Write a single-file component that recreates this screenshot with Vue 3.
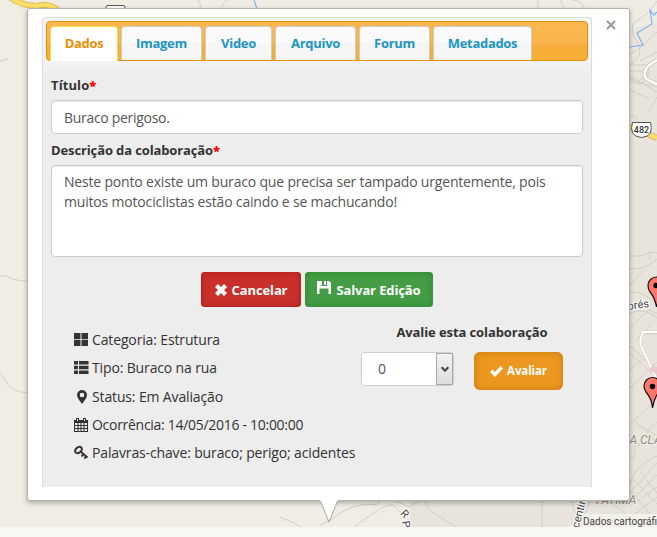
<script setup>
import { ref } from 'vue'

const tabs = [
  { label: 'Dados', width: 68 },
  { label: 'Imagem', width: 81 },
  { label: 'Video', width: 67 },
  { label: 'Arquivo', width: 81 },
  { label: 'Forum', width: 71 },
  { label: 'Metadados', width: 99 }
]
const active = ref('Dados')
const titulo = ref('Buraco perigoso.')
const descricao = ref('Neste ponto existe um buraco que precisa ser tampado urgentemente, pois muitos motociclistas estão caindo e se machucando!')
const details = [
  { icon: 'grid', text: 'Categoria: Estrutura' },
  { icon: 'list', text: 'Tipo: Buraco na rua' },
  { icon: 'marker', text: 'Status: Em Avaliação' },
  { icon: 'calendar', text: 'Ocorrência: 14/05/2016 - 10:00:00' },
  { icon: 'key', text: 'Palavras-chave: buraco; perigo; acidentes' }
]
</script>

<template>
  <main class="screen">
    <svg class="map" width="657" height="537" viewBox="0 0 657 537">
      <rect width="657" height="537" fill="#f0ede5" />
      <path d="M415 0H657V527H410V500L405 490Z" fill="#e8e4dc" />
      <path d="M330 0H657V30H330Z" fill="#efece4" />
      <path d="M630 30L657 22V0H657V70H630Z" fill="#ebe7df" />
      <g fill="none" stroke="#d3cec3" stroke-width="1">
        <path d="M0 62Q4 59 8 59M198 0Q202 4 200 9M228 0Q221 3 222 9M538 0V9M561 0Q562 7 566 9M573 0Q585 3 584 9" />
        <path d="M657 1Q650 14 636 21Q628 28 637 42T628 66M657 32L640 48L630 54M630 65H648Q652 78 640 84L630 78M630 71H647M630 76L657 92M630 81L657 87M630 90L650 99M640 61L657 52M636 84L648 73M657 97L649 111M630 116Q641 115 636 125" />
        <path d="M630 256H642L651 252L657 253M650 252V260M630 269Q645 270 657 259M630 286L643 270M630 292Q645 291 657 305M630 313Q645 307 657 318M630 329L648 310L657 313M630 346L657 370M630 353L657 378M636 340L650 326M630 388L657 362M643 334H657M630 370L642 359M630 425L657 398M635 421L657 443M630 436L640 445H635V458H630M657 422L645 432" />
        <path d="M630 485Q633 466 657 456M630 493L657 463M630 502L657 475M640 471L657 493M633 479L657 504M630 490L650 514M630 506L657 487M630 518L657 497M610 501L630 518M582 520L590 501M657 436L639 425" />
        <path d="M280 517Q293 522 301 527M320 525Q331 521 343 511Q362 502 377 505L380 500M354 527Q380 507 390 505Q395 504 401 513M382 513L385 510M394 500L409 507L420 500M425 500Q425 509 440 517L456 527" />
        <path d="M0 276H6Q15 281 27 281M0 372L6 381Q9 391 27 393" />
        <path d="M542 500V527M571 500L580 527" />
      </g>
      <g fill="none">
        <path d="M7 -5Q20 6 37 6Q48 3 58 10" stroke="#dfbd57" stroke-width="6" />
        <path d="M7 -5Q20 6 37 6Q48 3 58 10" stroke="#ffe168" stroke-width="4" />
        <path d="M254 0L257 9M657 12L654 15L650 10L652 24L637 33L643 45L630 47" stroke="#88aef3" stroke-width="1.2" />
        <path d="M657 60L648 66Q641 75 648 80L657 84" stroke="#c9c4b8" stroke-width="4" />
        <path d="M657 60L648 66Q641 75 648 80L657 84" stroke="#fff" stroke-width="2.500" />
        <path d="M628 126L657 138" stroke="#dfb85c" stroke-width="6" />
        <path d="M628 126L657 138" stroke="#ffe168" stroke-width="4" />
        <path d="M657 332H643Q639 340 641 346L657 380" stroke="#d2cdc4" stroke-width="3" />
        <path d="M657 332H643Q639 340 641 346L657 380" stroke="#fff" stroke-width="2" />
      </g>
      <path d="M650 370Q650 365 657 367V375Z" fill="#e9c9cf" />
      <path d="M106 10V7Q106 5.500 108 5.500H123Q125 5.500 125 7V10" fill="#fff" stroke="#555" />
      <path d="M632.500 122.500H650.500Q652 127 650.500 133Q648 137 641.500 137.500Q635 137 632.500 133Q630.500 128 632.500 122.500Z" fill="#fff" stroke="#555" />
      <text x="641.500" y="133" class="map-road" text-anchor="middle">482</text>
      <g class="map-label">
        <text x="622" y="310" transform="rotate(-8 628 310)">norés</text>
        <text x="401" y="517" transform="rotate(48 404 514)">R</text>
        <text x="404" y="525" transform="rotate(80 405 522)">P</text>
        <text x="578" y="531" transform="rotate(-75 578 531)">icentim</text>
      </g>
      <text x="623" y="444" class="map-area">TA CLARA</text>
      <text x="596" y="504" class="map-area">FATIMA</text>
      <g fill="#ff766a" stroke="#111" stroke-width="1.200">
        <path d="M656.500 307Q655 298 650 292Q648 289 648 285.500A8.500 8.500 0 0 1 665 285.500Q665 289 662 293Q658 298 656.500 307Z" />
        <path d="M652.500 408Q652 399 646 392Q644 389 644 386A8.500 8.500 0 0 1 661 386Q661 389 658 393Q654 399 652.500 408Z" />
      </g>
      <circle cx="656" cy="285.500" r="2.700" />
      <circle cx="652.500" cy="386.500" r="2.700" />
      <rect x="582" y="514" width="75" height="13" fill="#f5f4f0" opacity=".8" />
      <text x="583" y="525" class="map-credit">Dados cartográficos</text>
      <rect y="527" width="657" height="10" fill="#f8f7f2" />
    </svg>

    <section class="popup">
      <div class="panel">
        <nav class="tabs">
          <button
            v-for="t in tabs"
            :key="t.label"
            class="tab"
            :class="{ active: t.label === active }"
            :style="{ width: t.width + 'px' }"
            @click="active = t.label"
          >{{ t.label }}</button>
        </nav>

        <form class="form" @submit.prevent>
          <label class="label title-label" for="titulo">Título<b>*</b></label>
          <input id="titulo" v-model="titulo" class="field">
          <label class="label" for="descricao">Descrição da colaboração<b>*</b></label>
          <textarea id="descricao" v-model="descricao" class="field area"></textarea>
          <div class="actions">
            <button class="btn red">
              <svg width="12" height="12" viewBox="0 0 12 12"><path d="M3 0L6 3L9 0L12 3L9 6L12 9L9 12L6 9L3 12L0 9L3 6L0 3Z" /></svg>
              <span>Cancelar</span>
            </button>
            <button class="btn green">
              <svg class="disk" width="14" height="13" viewBox="0 0 14 13"><path d="M0 0H3V5H10V0H12L14 2V13H11.500V7.500H2.500V13H0ZM7 0H9V4H7Z" /><path d="M3 0H5V4.500H3Z" /></svg>
              <span>Salvar Edição</span>
            </button>
          </div>
        </form>

        <div class="bottom">
          <ul class="details">
            <li v-for="d in details" :key="d.icon" :class="d.icon">
              <svg width="14" height="14" viewBox="0 0 14 14">
                <path v-if="d.icon === 'grid'" d="M0 0H6.500V6.200H0ZM7.500 0H14V6.200H7.500ZM0 7H6.500V13H0ZM7.500 7H14V13H7.500Z" />
                <path v-else-if="d.icon === 'list'" d="M0 0H4V3.500H0ZM5 0H14.500V3.500H5ZM0 4.700H4V8.200H0ZM5 4.700H14.500V8.200H5ZM0 9.500H4V13H0ZM5 9.500H14.500V13H5Z" />
                <path v-else-if="d.icon === 'marker'" fill-rule="evenodd" d="M8 0A5 5 0 0 0 3 5C3 8 6 11 8 14C10 11 13 8 13 5A5 5 0 0 0 8 0ZM8 2.700A2.300 2.300 0 1 1 8 7.300A2.300 2.300 0 1 1 8 2.700Z" />
                <path v-else-if="d.icon === 'calendar'" fill-rule="evenodd" d="M0 2H2V0H5V2H9V0H12V2H14V14H0ZM1 5V7H3.500V5ZM4.500 5V7H6.500V5ZM7.500 5V7H9.500V5ZM10.500 5V7H13V5ZM1 8V10H3.500V8ZM4.500 8V10H6.500V8ZM7.500 8V10H9.500V8ZM10.500 8V10H13V8ZM1 11V13H3.500V11ZM4.500 11V13H6.500V11ZM7.500 11V13H9.500V11ZM10.500 11V13H13V11ZM3 1V3H4V1ZM10 1V3H11V1Z" />
                <g v-else fill="none" stroke="#333" stroke-width="2">
                  <ellipse cx="4.500" cy="4" rx="3.800" ry="2.700" transform="rotate(-40 4.500 4)" />
                  <path d="M6.500 5.500L13.500 11.500M9.500 8L7.500 10.500M12 10L10.500 12.500" />
                </g>
              </svg>
              <span>{{ d.text }}</span>
            </li>
          </ul>
          <div class="rating">
            <h2>Avalie esta colaboração</h2>
            <div class="rate-row">
              <div class="select">
                <span>0</span>
                <i><svg width="8" height="7" viewBox="0 0 8 7"><path d="M.7 1.200L4 4.700L7.300 1.200" fill="none" stroke="#444" stroke-width="2" /></svg></i>
              </div>
              <button class="btn orange">
                <svg width="13" height="11" viewBox="0 0 13 11"><path d="M0 6L2.500 3.500L5 6L10.500 0L13 2.500L5 11Z" /></svg>
                <span>Avaliar</span>
              </button>
            </div>
          </div>
        </div>
      </div>
      <button class="close" aria-label="Fechar">
        <svg width="10" height="10" viewBox="0 0 10 10"><path d="M1 1L9 9M9 1L1 9" stroke="#999" stroke-width="2" /></svg>
      </button>
      <svg class="tail" width="24" height="28" viewBox="0 0 24 28"><path d="M2 0L11 22L20 0" fill="#fff" stroke="#aaa7a0" /><path d="M2 0H20" stroke="#fff" stroke-width="2" /></svg>
    </section>
  </main>
</template>

<style>
body { margin: 0; overflow: hidden; }
</style>

<style scoped>
* { box-sizing: border-box; }
.screen { position: relative; width: 657px; height: 537px; overflow: hidden; font: 14px/20px "Trebuchet MS", "Open Sans", sans-serif; letter-spacing: -.18px; color: #333; }
.map { display: block; letter-spacing: 0; }
.map text { font-family: Roboto, sans-serif; }
.map-road { font-size: 9px; font-weight: 500; fill: #333; }
.map-label text { font-size: 11px; fill: #444; stroke: #fff; stroke-width: 2px; paint-order: stroke; }
.map .map-area { font-size: 12px; font-style: italic; fill: #8f8b80; stroke: #f2efe9; stroke-width: 2px; paint-order: stroke; }
.map-credit { font-size: 10px; fill: #444; }
button, input, textarea { font: inherit; letter-spacing: inherit; }
.popup { position: absolute; left: 27px; top: 8px; width: 603px; height: 493px; padding: 8px 14px; display: flex; align-items: flex-start; background: #fff; border: 1px solid #b5b2ab; border-radius: 3px; box-shadow: 0 2px 5px rgba(0, 0, 0, .3); }
.panel { flex: none; width: 550px; height: 470px; padding: 3px; border: 1px solid #ddd; border-bottom: 0; border-radius: 4px 4px 0 0; background: linear-gradient(#f6f6f6 0, #f3f3f3 44px, #ededed 60px); }
.tabs { display: flex; align-items: flex-start; gap: 3px; height: 40px; padding: 4px 3px 0; border: 1px solid #e78f08; border-radius: 4px; background: linear-gradient(#fbb850 0, #f8b44a 60%, #f6ad37 61%, #f6ae36 100%); }
.tab { height: 34px; padding: 0; border: 1px solid #ccc; border-bottom: 0; border-radius: 4px 4px 0 0; background: linear-gradient(#fafafa 48%, #f5f5f5 52%, #f6f6f6); color: #1c94c4; font-weight: 700; font-size: 13px; line-height: 33px; letter-spacing: -.3px; text-align: center; }
.tab.active { height: 35px; padding-bottom: 1px; background: #fff; border-color: #fbd850; color: #eb8f00; }
.form { display: flex; flex-direction: column; padding: 0 5px; }
.label { height: 20px; margin: 6px 0 5px; font-weight: 700; font-size: 13px; letter-spacing: -.12px; }
.title-label { margin-top: 14px; letter-spacing: .1px; }
.label b { color: #f00; }
.field { width: 532px; height: 34px; padding: 6px 12px; border: 1px solid #ccc; border-radius: 4px; outline: 0; resize: none; background: #fff; color: #555; box-shadow: inset 0 1px 1px rgba(0, 0, 0, .075); }
input.field { letter-spacing: -.3px; }
.area { height: 92px; overflow: hidden; }
.actions { display: flex; justify-content: center; gap: 4px; margin-top: 15px; }
.btn { display: flex; align-items: center; justify-content: center; gap: 5px; height: 35px; padding: 0; border: 0; border-radius: 4px; color: #fff; fill: #fff; font-weight: 700; font-size: 13px; letter-spacing: -.12px; }
.disk { margin-top: -4px; }
.red { width: 100px; background: #c9302c; box-shadow: inset 0 0 6px #a51d1d; }
.green { width: 128px; background: #449d44; box-shadow: inset 0 0 6px #2c832c; }
.orange { width: 89px; height: 38px; border-radius: 6px; background: #ec971f; box-shadow: inset 0 0 7px #c37a10; font-size: 11.500px; gap: 4px; }
.bottom { display: flex; justify-content: space-between; padding: 19px 25px 0 28px; }
.details { margin: 0; padding: 0; list-style: none; }
.details li { display: flex; align-items: center; gap: 4px; height: 28.300px; white-space: nowrap; letter-spacing: -.14px; }
.details .calendar { letter-spacing: -.29px; }
.details svg { fill: #333; overflow: visible; }
.rating { width: 202px; }
.rating h2 { margin: -4px 0 10px 20px; font-size: 13px; font-weight: 700; line-height: 20px; letter-spacing: -.1px; text-align: center; }
.rate-row { display: flex; justify-content: space-between; align-items: flex-start; }
.select { display: flex; justify-content: space-between; width: 93px; height: 34px; padding-left: 16px; border: 1px solid #ccc; border-radius: 4px; background: #fff; line-height: 32px; color: #555; }
.select i { display: flex; align-items: center; justify-content: center; width: 17px; height: 32px; border: 1px solid #aaa; background: linear-gradient(#f2f2f2, #ddd); }
.close { display: flex; margin: 3px 0 0 14px; padding: 0; border: 0; background: none; }
.tail { position: absolute; left: 290px; top: 491px; }
</style>
